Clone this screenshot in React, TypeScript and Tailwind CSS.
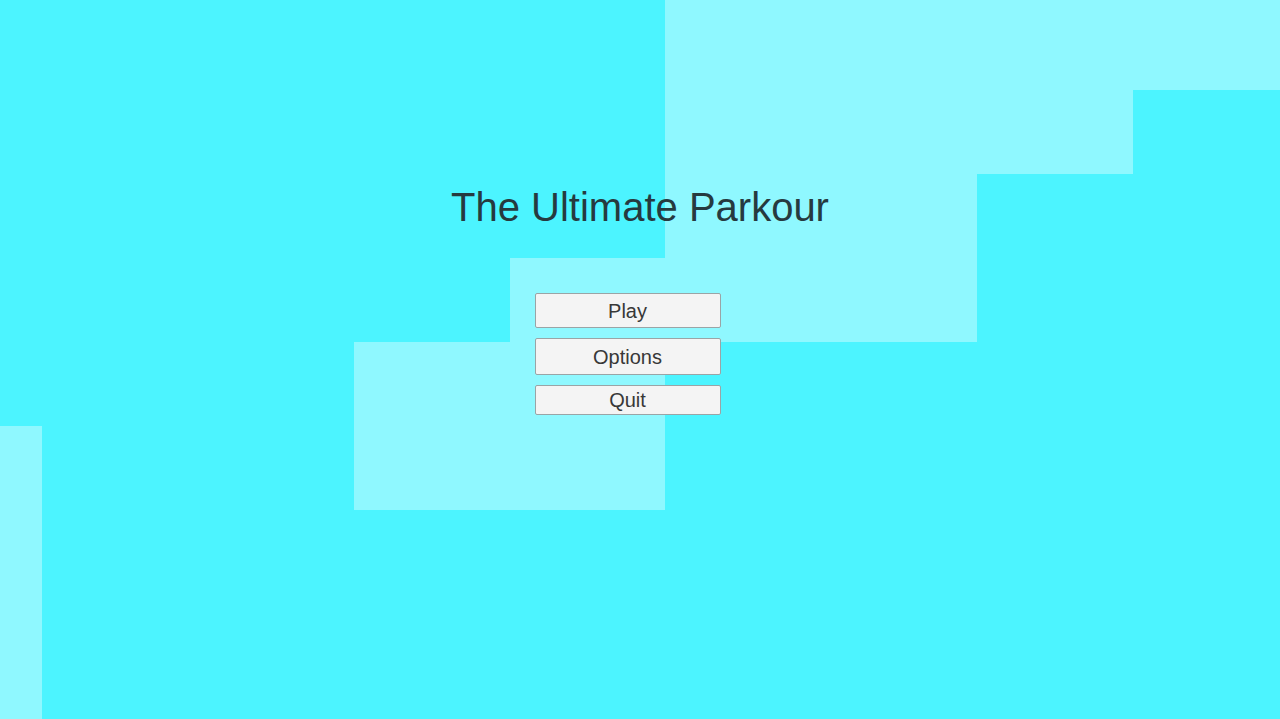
import React from 'react';

const menuItems = [
  { label: 'Play', height: 'h-[35px]' },
  { label: 'Options', height: 'h-[37px]' },
  { label: 'Quit', height: 'h-[30px]' },
];

// blocky staircase scenery behind the menu
const Scenery = () => (
  <svg
    className="absolute inset-0 h-full w-full"
    viewBox="0 0 1280 719"
    preserveAspectRatio="none"
  >
    <rect width="1280" height="719" fill="#4cf4ff" />
    <polygon
      fill="#8ff8ff"
      points="665,0 1280,0 1280,90 1133,90 1133,174 977,174 977,342 665,342 665,510 354,510 354,342 510,342 510,258 665,258"
    />
    <rect x="0" y="426" width="42" height="293" fill="#8ff8ff" />
  </svg>
);

function App() {
  return (
    <div
      className="relative h-[719px] w-full overflow-hidden bg-[#4cf4ff]"
      style={{ fontFamily: '"Liberation Sans", Arial, sans-serif' }}
    >
      <Scenery />
      <main className="relative flex flex-col items-center pt-[187px]">
        <h1 className="text-[40px] leading-[40px] text-[#263a3f]">The Ultimate Parkour</h1>
        <div className="mt-[66px] mr-[25px] flex w-[186px] flex-col gap-[10px]">
          {menuItems.map((item) => (
            <button
              key={item.label}
              className={`${item.height} flex items-center justify-center rounded-[2px] border border-[#9aa4a6] bg-[#f4f4f4] text-[20px] text-[#383838]`}
            >
              {item.label}
            </button>
          ))}
        </div>
      </main>
    </div>
  );
}

export default App;
